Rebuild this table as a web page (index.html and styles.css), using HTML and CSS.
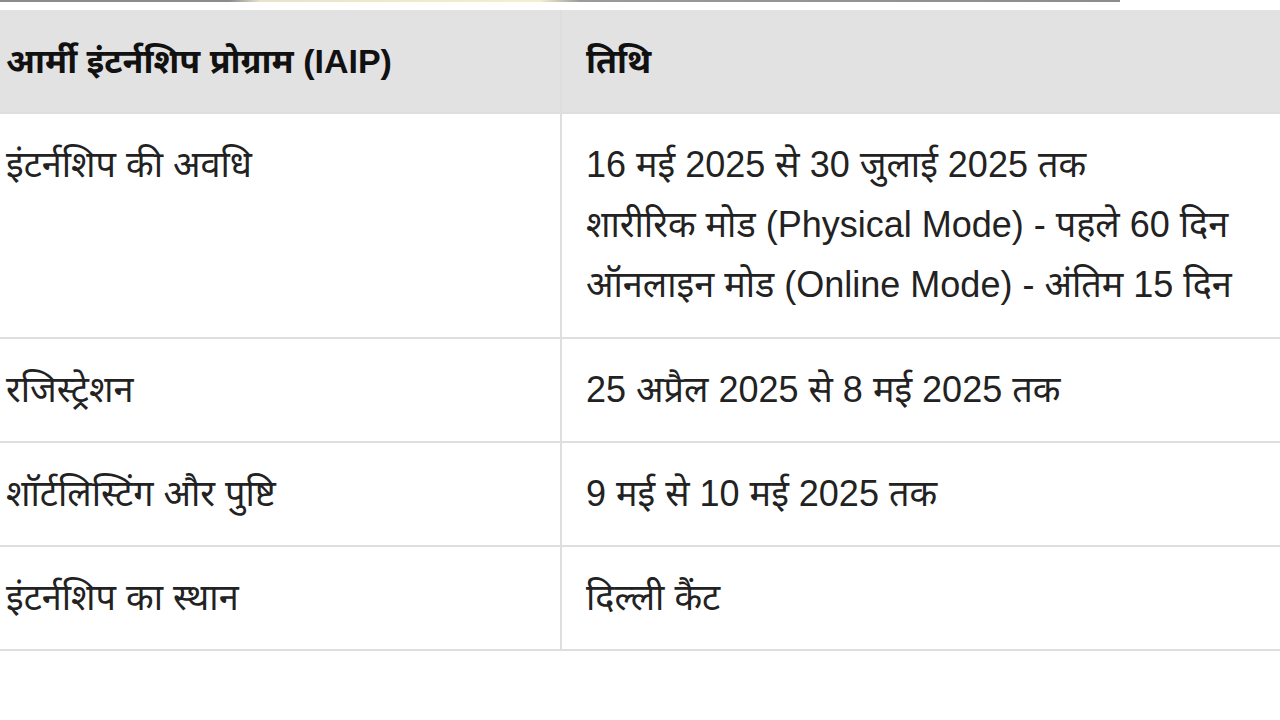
FILE: index.html
```html
<!DOCTYPE html>
<html lang="hi">
<head>
<meta charset="utf-8">
<title>आर्मी इंटर्नशिप प्रोग्राम (IAIP)</title>
<link rel="stylesheet" href="styles.css">
</head>
<body>
<div class="topline"></div>
<table class="dates">
  <thead>
    <tr>
      <th class="c1">आर्मी इंटर्नशिप प्रोग्राम (IAIP)</th>
      <th class="c2">तिथि</th>
    </tr>
  </thead>
  <tbody>
    <tr class="multi">
      <td class="c1">इंटर्नशिप की अवधि</td>
      <td class="c2">16 मई 2025 से 30 जुलाई 2025 तक<br>शारीरिक मोड (Physical Mode) - पहले 60 दिन<br>ऑनलाइन मोड (Online Mode) - अंतिम 15 दिन</td>
    </tr>
    <tr>
      <td class="c1">रजिस्ट्रेशन</td>
      <td class="c2">25 अप्रैल 2025 से 8 मई 2025 तक</td>
    </tr>
    <tr>
      <td class="c1">शॉर्टलिस्टिंग और पुष्टि</td>
      <td class="c2">9 मई से 10 मई 2025 तक</td>
    </tr>
    <tr>
      <td class="c1">इंटर्नशिप का स्थान</td>
      <td class="c2">दिल्ली कैंट</td>
    </tr>
  </tbody>
</table>
</body>
</html>
```

FILE: styles.css
```css
html, body {
  margin: 0;
  padding: 0;
  background: #ffffff;
}
body {
  font-family: "Liberation Sans", "Noto Sans", sans-serif;
  color: #222222;
  overflow: hidden;
}
.topline {
  width: 1120px;
  height: 2px;
  background: linear-gradient(90deg, #8c8c8c 0, #8c8c8c 230px, #e8e4c8 260px, #f3efcf 540px, #9a9a9a 580px, #8c8c8c 1120px);
  margin-bottom: 8px;
}
.dates {
  border-collapse: collapse;
  width: 1290px;
  table-layout: fixed;
}
.dates th, .dates td {
  font-size: 36px;
  line-height: 60px;
  padding: 21px 0 21px;
  text-align: left;
  vertical-align: top;
  border-bottom: 2px solid #dedede;
}
.dates .multi td {
  padding-bottom: 22px;
}
.dates th {
  background: #e2e2e2;
  font-size: 34px;
  font-weight: bold;
  color: #111111;
}
.dates .c1 {
  width: 554px;
  padding-left: 6px;
  border-right: 2px solid #dedede;
}
.dates .c2 {
  padding-left: 24px;
}
```
